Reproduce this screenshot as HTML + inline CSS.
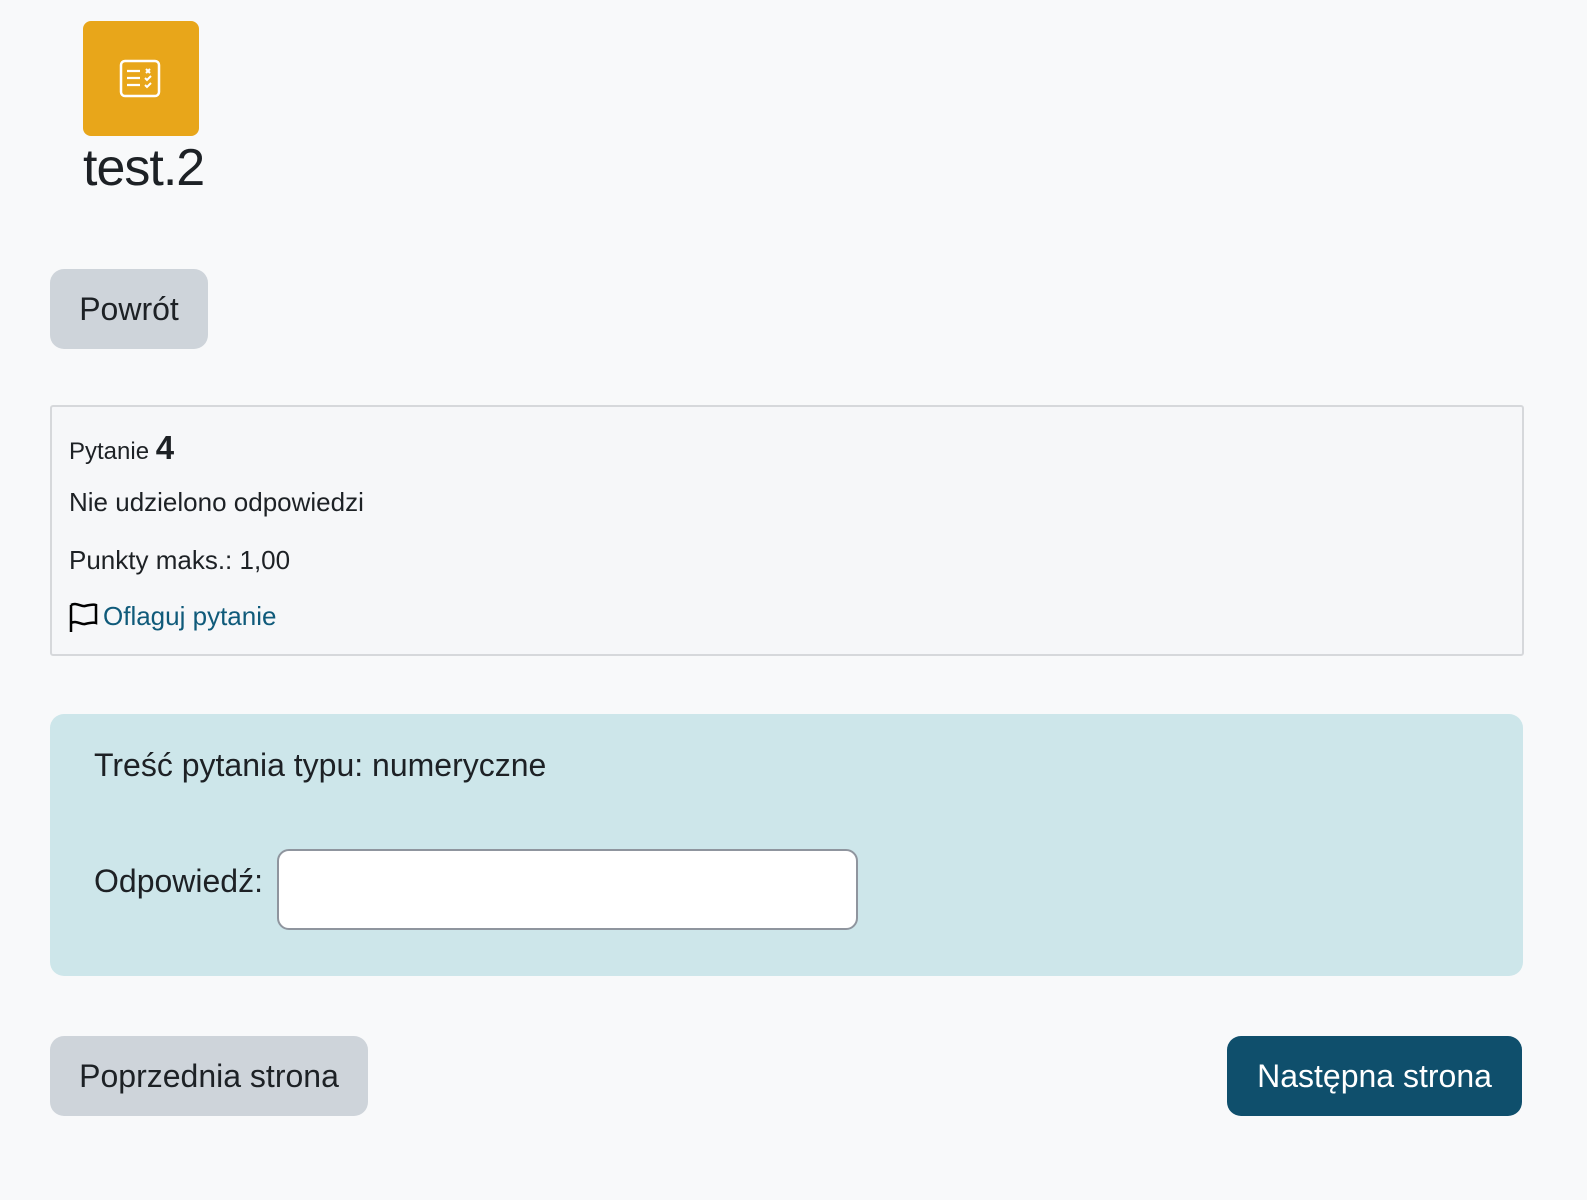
<!DOCTYPE html>
<html><head><meta charset="utf-8"><style>
body{margin:0;background:#f8f9fa;font-family:"Liberation Sans",sans-serif;color:#1d2125;width:1587px;height:1200px;position:relative;overflow:hidden}
.abs{position:absolute}
.icon{left:83px;top:21px;width:116px;height:115px;background:#e8a61a;border-radius:8px}
.title{left:83px;top:138px;font-size:52px;letter-spacing:-1px}
.btn{border-radius:14px;font-size:32px;display:flex;align-items:center;justify-content:center}
.grey{background:#ced4da;color:#1d2125}
.card{left:50px;top:405px;width:1470px;height:247px;border:2px solid #d6d8db;background:#f6f7f9;border-radius:3px}
.card div{position:absolute;left:17px;font-size:26px}
.blue{left:50px;top:714px;width:1473px;height:262px;background:#cde6ea;border-radius:14px}
</style></head><body>
<div class="abs icon"><svg width="116" height="115" viewBox="0 0 116 115"><rect x="38" y="40" width="38" height="35" rx="4" fill="none" stroke="#fff" stroke-width="2.5"/><path d="M44 50h13M44 57h13M44 64h13" stroke="#fff" stroke-width="2.3"/><path d="M63 48l4 4M67 48l-4 4M62 57l2 2 4-4M62 64l2 2 4-4" stroke="#fff" stroke-width="2" fill="none"/></svg></div>
<div class="abs title">test.2</div>
<div class="abs btn grey" style="left:50px;top:269px;width:158px;height:80px">Powrót</div>
<div class="abs card">
<div style="top:22px;font-size:24px">Pytanie <b style="font-size:33px">4</b></div>
<div style="top:80px">Nie udzielono odpowiedzi</div>
<div style="top:138px">Punkty maks.: 1,00</div>
<div style="top:194px;color:#0f5a7a"><svg width="30" height="32" viewBox="0 0 30 32" style="vertical-align:-8px;margin-right:4px"><path d="M2 31V4M2 4c6-3 10 2 14 1s8-2 11-1v18c-3-1-7 0-11 1s-8-4-14-1" fill="none" stroke="#000" stroke-width="2.5"/></svg>Oflaguj pytanie</div>
</div>
<div class="abs blue">
<div class="abs" style="left:44px;top:33px;font-size:32px">Treść pytania typu: numeryczne</div>
<div class="abs" style="left:44px;top:149px;font-size:32px">Odpowiedź:</div>
<div class="abs" style="left:227px;top:135px;width:577px;height:77px;background:#fff;border:2px solid #8f959e;border-radius:12px"></div>
</div>
<div class="abs btn grey" style="left:50px;top:1036px;width:318px;height:80px">Poprzednia strona</div>
<div class="abs btn" style="left:1227px;top:1036px;width:295px;height:80px;background:#0f4f6c;color:#fff">Następna strona</div>
</body></html>
